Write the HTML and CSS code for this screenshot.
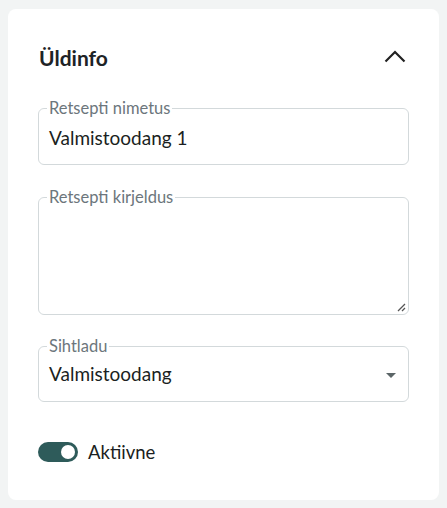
FILE: index.html
```html
<!DOCTYPE html>
<html lang="et">
<head>
<meta charset="utf-8">
<link rel="stylesheet" href="styles.css">
</head>
<body>
<section class="card">
  <header class="card-head">
    <h2 class="title">Üldinfo</h2>
    <svg class="chevron" width="22" height="14" viewBox="0 0 22 14"><path d="M1.5 12.5 L11 3 L20.5 12.5" fill="none" stroke="#222" stroke-width="2.2"/></svg>
  </header>
  <fieldset class="field f-name">
    <legend>Retsepti nimetus</legend>
    <div class="value">Valmistoodang 1</div>
  </fieldset>
  <fieldset class="field f-desc">
    <legend>Retsepti kirjeldus</legend>
    <svg class="grip" width="10" height="10" viewBox="0 0 10 10"><path d="M9 2 L2 9 M9 6 L6 9" stroke="#555" stroke-width="1.3"/></svg>
  </fieldset>
  <fieldset class="field f-sel">
    <legend>Sihtladu</legend>
    <div class="value">Valmistoodang</div>
    <svg class="caret" width="10" height="6" viewBox="0 0 10 6"><path d="M0 0 H10 L5 5 Z" fill="#5b6567"/></svg>
  </fieldset>
  <div class="toggle-row">
    <span class="toggle"><span class="knob"></span></span>
    <span class="toggle-label">Aktiivne</span>
  </div>
</section>
</body>
</html>
```
FILE: styles.css
```css
html, body { margin: 0; padding: 0; }
body {
  background: #f2f4f4;
  font-family: "Lato", "Liberation Sans", sans-serif;
  color: #1b1f22;
  width: 447px;
  height: 508px;
  overflow: hidden;
}
.card {
  margin: 9px 8px 0 8px;
  height: 491px;
  box-sizing: border-box;
  background: #fff;
  border-radius: 8px;
  padding: 30px 30px 0 30px;
}
.card-head {
  display: flex;
  align-items: center;
  justify-content: space-between;
  height: 36px;
  margin-bottom: 23px;
}
.title {
  margin: 0;
  font-size: 21px;
  font-weight: 700;
  color: #1e2326;
  padding-left: 1px;
}
.chevron { margin-right: 3px; margin-top: -2px; }
.field {
  margin: 0;
  border: 1px solid #d3d9db;
  border-radius: 6px;
  padding: 0 10px;
  position: relative;
  min-width: 0;
  box-sizing: border-box;
}
.field legend {
  padding: 0 2px;
  margin-left: -2px;
  font-size: 16.5px;
  color: #6c767c;
  line-height: 20px;
}
.value {
  font-size: 19px;
  line-height: 24px;
  color: #1b1f22;
  margin-top: 8px;
}
.f-name { height: 67px; }
.f-desc { height: 128px; margin-top: 22px; }
.f-sel { height: 66px; margin-top: 21px; }
.f-sel .value { margin-top: 6px; }
.grip { position: absolute; right: 2px; bottom: 2px; }
.caret { position: absolute; right: 12px; top: 17px; }
.toggle-row {
  display: flex;
  align-items: center;
  gap: 10px;
  margin-top: 39px;
}
.toggle {
  width: 40px;
  height: 20px;
  border-radius: 10px;
  background: #2e5b5a;
  display: flex;
  align-items: center;
  justify-content: flex-end;
  padding: 0 3px;
  box-sizing: border-box;
}
.knob {
  width: 14px;
  height: 14px;
  border-radius: 50%;
  background: #fff;
}
.toggle-label { font-size: 18.5px; color: #1b1f22; }
```
